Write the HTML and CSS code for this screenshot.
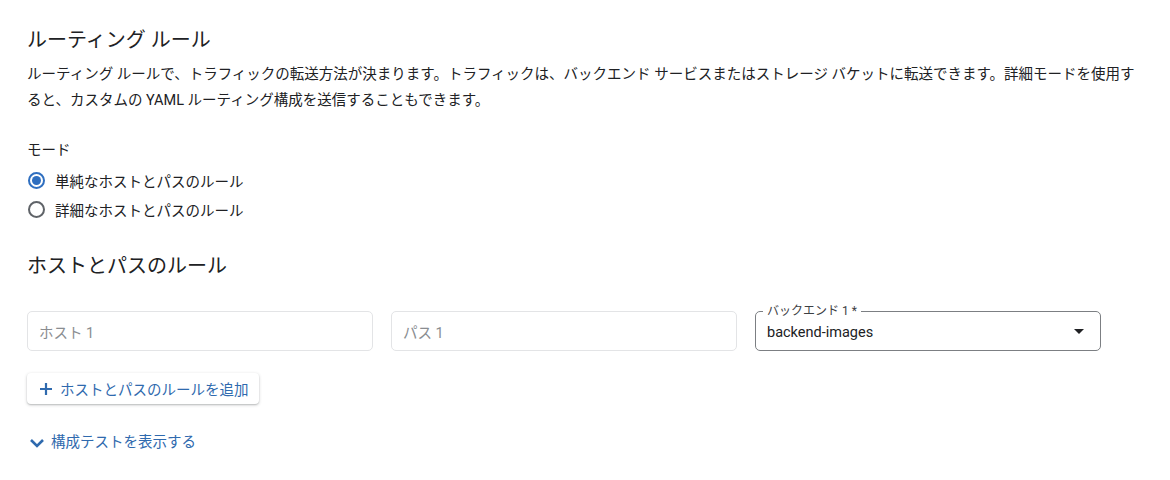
FILE: index.html
```html
<!DOCTYPE html>
<html lang="ja">
<head>
<meta charset="utf-8">
<link rel="stylesheet" href="styles.css">
</head>
<body>
<main class="page">
  <h1 class="title">ルーティング ルール</h1>
  <p class="desc">ルーティング ルールで、トラフィックの転送方法が決まります。トラフィックは、バックエンド サービスまたはストレージ バケットに転送できます。詳細モードを使用すると、カスタムの YAML ルーティング構成を送信することもできます。</p>

  <div class="mode">
    <div class="mode-label">モード</div>
    <label class="radio-row">
      <span class="radio checked"></span>
      <span>単純なホストとパスのルール</span>
    </label>
    <label class="radio-row">
      <span class="radio"></span>
      <span>詳細なホストとパスのルール</span>
    </label>
  </div>

  <h2 class="subtitle">ホストとパスのルール</h2>

  <div class="fields">
    <div class="field"><span class="placeholder">ホスト 1</span></div>
    <div class="field"><span class="placeholder">パス 1</span></div>
    <div class="field select">
      <span class="float-label">バックエンド 1 *</span>
      <span class="value">backend-images</span>
      <span class="caret"></span>
    </div>
  </div>

  <button class="add-btn" type="button">
    <svg width="14" height="14" viewBox="0 0 14 14"><path d="M7 1v12M1 7h12" stroke="currentColor" stroke-width="2.2" fill="none"/></svg>
    <span>ホストとパスのルールを追加</span>
  </button>

  <div class="toggle">
    <svg width="16" height="12" viewBox="0 0 16 12"><path d="M2 3l6 6 6-6" stroke="currentColor" stroke-width="2.6" fill="none"/></svg>
    <span>構成テストを表示する</span>
  </div>
</main>
</body>
</html>
```

FILE: styles.css
```css
* { box-sizing: border-box; }
body {
  margin: 0;
  background: #ffffff;
  color: #202124;
  font-family: Roboto, "Noto Sans CJK JP", sans-serif;
}
.page {
  padding: 25px 8px 0 27px;
}
.title {
  margin: 0;
  font-size: 20px;
  font-weight: 400;
  line-height: 30px;
}
.desc {
  margin: 7px 0 0;
  max-width: 1116px;
  font-size: 14.5px;
  line-height: 26px;
  color: #202124;
}
.mode {
  margin-top: 27px;
  font-size: 14.5px;
}
.mode-label {
  line-height: 20px;
  margin-bottom: 5px;
}
.radio-row {
  display: flex;
  align-items: center;
  gap: 10px;
  height: 29px;
}
.radio {
  width: 17px;
  height: 17px;
  border: 2px solid #5f6368;
  border-radius: 50%;
  margin-left: 1px;
  display: inline-flex;
  align-items: center;
  justify-content: center;
}
.radio.checked {
  border-color: #2f6fc0;
}
.radio.checked::after {
  content: "";
  width: 9px;
  height: 9px;
  border-radius: 50%;
  background: #2f6fc0;
}
.subtitle {
  margin: 27px 0 0;
  font-size: 20px;
  font-weight: 400;
  line-height: 30px;
}
.fields {
  display: flex;
  gap: 18px;
  margin-top: 30px;
}
.field {
  position: relative;
  width: 346px;
  height: 40px;
  border: 1px solid #e3e4e6;
  border-radius: 5px;
  display: flex;
  align-items: center;
  padding: 0 11px;
  font-size: 14.5px;
}
.placeholder {
  color: #8a8d91;
}
.select {
  border-color: #7c7f83;
  justify-content: space-between;
}
.float-label {
  position: absolute;
  top: -8px;
  left: 7px;
  padding: 0 4px;
  background: #ffffff;
  font-size: 12px;
  line-height: 14px;
  color: #3c4043;
}
.value {
  font-size: 14.5px;
  color: #202124;
  padding-top: 2px;
}
.caret {
  width: 0;
  height: 0;
  border-left: 5px solid transparent;
  border-right: 5px solid transparent;
  border-top: 5px solid #202124;
  margin-right: 5px;
}
.add-btn {
  margin-top: 22px;
  display: flex;
  align-items: center;
  gap: 7px;
  height: 31px;
  padding: 0 10px 0 12px;
  border: none;
  border-radius: 4px;
  background: #ffffff;
  box-shadow: 0 1px 3px rgba(60, 64, 67, 0.3), 0 1px 1px rgba(60, 64, 67, 0.12);
  color: #2f6aae;
  font-family: Roboto, "Noto Sans CJK JP", sans-serif;
  font-size: 14.5px;
}
.toggle {
  margin-top: 29px;
  display: flex;
  align-items: center;
  gap: 6px;
  color: #2f6aae;
  font-size: 14.5px;
  line-height: 20px;
  padding-left: 2px;
}
```
